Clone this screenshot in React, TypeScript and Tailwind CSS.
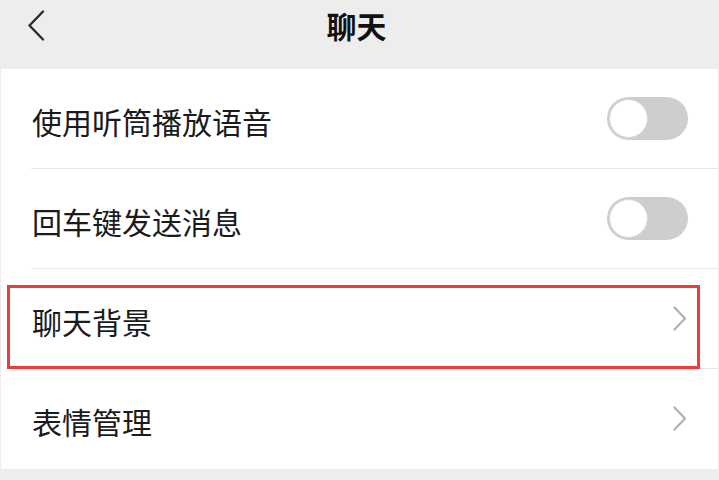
import React from "react";

const font = { fontFamily: '"Noto Sans CJK SC", "Noto Sans", sans-serif' };

function Toggle() {
  return (
    <div className="w-[81px] h-[43px] rounded-full bg-[#cecece] p-[2px] flex items-center">
      <div className="w-[39px] h-[39px] rounded-full bg-white border border-[#d4d4d4]" />
    </div>
  );
}

function Chevron() {
  return (
    <svg width="16" height="25" viewBox="0 0 16 25" fill="none">
      <path d="M2.5 1.5 L13 12.5 L2.5 23.5" stroke="#b0b0b0" strokeWidth="2.2" strokeLinecap="round" strokeLinejoin="round" />
    </svg>
  );
}

function Row({ label, right, divider }: { label: string; right: React.ReactNode; divider: boolean }) {
  return (
    <div className="flex flex-col">
      <div className="h-[99px] flex items-center justify-between pl-[31px] pr-[30px]">
        <span className="text-[30px] leading-none text-[#1b1b1b] pt-[4px]">{label}</span>
        {right}
      </div>
      {divider ? <div className="ml-[30px] h-px bg-[#e6e6e6]" /> : <div className="h-px" />}
    </div>
  );
}

export default function App() {
  return (
    <div className="w-[719px] h-[480px] bg-[#ededed] flex flex-col overflow-hidden" style={font}>
      <div className="h-[69px] flex items-start justify-center relative">
        <div className="absolute left-[27px] top-[10px]">
          <svg width="18" height="31" viewBox="0 0 18 31" fill="none">
            <path d="M16 1.5 L2.5 15.5 L16 29.5" stroke="#2a2a2a" strokeWidth="2.4" strokeLinecap="round" strokeLinejoin="round" />
          </svg>
        </div>
        <span className="text-[30px] leading-none font-bold text-[#111] mt-[10px] ml-[-6px]">聊天</span>
      </div>
      <div className="bg-white border-x border-[#ececec] relative">
        <Row label="使用听筒播放语音" right={<Toggle />} divider />
        <Row label="回车键发送消息" right={<Toggle />} divider />
        <Row label="聊天背景" right={<Chevron />} divider />
        <Row label="表情管理" right={<Chevron />} divider={false} />
        <div className="absolute left-[6px] top-[216px] w-[693px] h-[84px] border-[3px] border-[#ef3b3b] pointer-events-none" />
      </div>
    </div>
  );
}
